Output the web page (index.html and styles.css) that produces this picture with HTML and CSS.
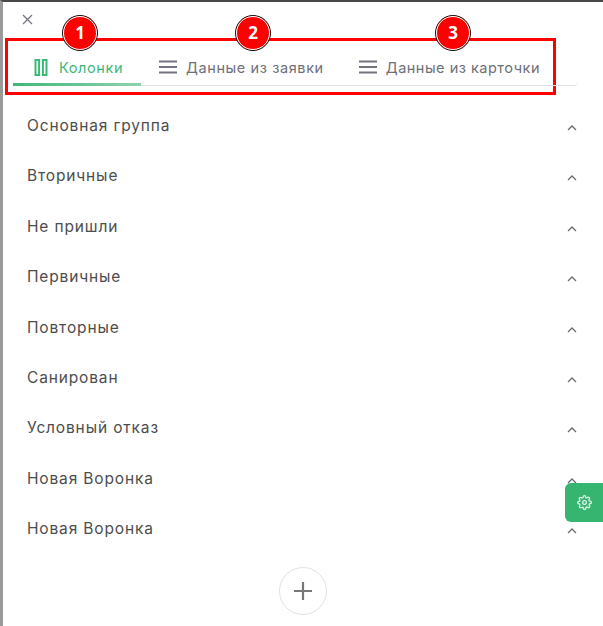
FILE: index.html
```html
<!DOCTYPE html>
<html lang="en">
<head>
  <meta charset="UTF-8" />
  <title>Настройка колонок</title>
  <link rel="stylesheet" href="styles.css">
</head>
<body>
  <div class="panel">
    <button class="close" aria-label="Закрыть">
      <svg width="11" height="11" viewBox="0 0 11 11"><path d="M1 1l9 9M10 1l-9 9" stroke="#77777f" stroke-width="1.3" fill="none"/></svg>
    </button>

    <!-- Tabs with red callout -->
    <div class="callout">
      <span class="badge badge-1">1</span>
      <span class="badge badge-2">2</span>
      <span class="badge badge-3">3</span>
      <div class="tabs">
        <div class="tab tab-active">
          <svg width="14" height="17" viewBox="0 0 14 17"><path d="M1.5 1h3.6v15H1.5zM8.9 1h3.6v15H8.9z" fill="none" stroke="#3cb878" stroke-width="2"/></svg>
          <span>Колонки</span>
        </div>
        <div class="tab tab-second">
          <svg width="18" height="14" viewBox="0 0 18 14"><path d="M0 1.5h18M0 7h18M0 12.5h18" stroke="#73737f" stroke-width="2"/></svg>
          <span>Данные из заявки</span>
        </div>
        <div class="tab tab-third">
          <svg width="18" height="14" viewBox="0 0 18 14"><path d="M0 1.5h18M0 7h18M0 12.5h18" stroke="#73737f" stroke-width="2"/></svg>
          <span>Данные из карточки</span>
        </div>
      </div>
    </div>

    <ul class="groups">
      <li class="group">Основная группа<svg class="chevron" width="10" height="6" viewBox="0 0 10 6"><path d="M1 5l4-4 4 4" fill="none" stroke="#6b6b75" stroke-width="1.3"/></svg></li>
      <li class="group">Вторичные<svg class="chevron" width="10" height="6" viewBox="0 0 10 6"><path d="M1 5l4-4 4 4" fill="none" stroke="#6b6b75" stroke-width="1.3"/></svg></li>
      <li class="group">Не пришли<svg class="chevron" width="10" height="6" viewBox="0 0 10 6"><path d="M1 5l4-4 4 4" fill="none" stroke="#6b6b75" stroke-width="1.3"/></svg></li>
      <li class="group">Первичные<svg class="chevron" width="10" height="6" viewBox="0 0 10 6"><path d="M1 5l4-4 4 4" fill="none" stroke="#6b6b75" stroke-width="1.3"/></svg></li>
      <li class="group">Повторные<svg class="chevron" width="10" height="6" viewBox="0 0 10 6"><path d="M1 5l4-4 4 4" fill="none" stroke="#6b6b75" stroke-width="1.3"/></svg></li>
      <li class="group">Санирован<svg class="chevron" width="10" height="6" viewBox="0 0 10 6"><path d="M1 5l4-4 4 4" fill="none" stroke="#6b6b75" stroke-width="1.3"/></svg></li>
      <li class="group">Условный отказ<svg class="chevron" width="10" height="6" viewBox="0 0 10 6"><path d="M1 5l4-4 4 4" fill="none" stroke="#6b6b75" stroke-width="1.3"/></svg></li>
      <li class="group">Новая Воронка<svg class="chevron" width="10" height="6" viewBox="0 0 10 6"><path d="M1 5l4-4 4 4" fill="none" stroke="#6b6b75" stroke-width="1.3"/></svg></li>
      <li class="group">Новая Воронка<svg class="chevron" width="10" height="6" viewBox="0 0 10 6"><path d="M1 5l4-4 4 4" fill="none" stroke="#6b6b75" stroke-width="1.3"/></svg></li>
    </ul>

    <div class="add-row">
      <button class="add" aria-label="Добавить">
        <svg width="20" height="20" viewBox="0 0 20 20"><path d="M10 1v18M1 10h18" stroke="#77777a" stroke-width="2.2"/></svg>
      </button>
    </div>
  </div>

  <button class="settings" aria-label="Настройки">
    <svg width="15" height="15" viewBox="0 0 24 24" fill="none" stroke="#fff" stroke-opacity=".85" stroke-width="2"><circle cx="12" cy="12" r="3"/><path d="M19.4 15a1.65 1.65 0 0 0 .33 1.82l.06.06a2 2 0 1 1-2.83 2.83l-.06-.06a1.65 1.65 0 0 0-2.82 1.17V21a2 2 0 1 1-4 0v-.09a1.65 1.65 0 0 0-2.82-1.12l-.06.06a2 2 0 1 1-2.83-2.83l.06-.06a1.65 1.65 0 0 0-1.17-2.82H3a2 2 0 1 1 0-4h.09a1.65 1.65 0 0 0 1.12-2.82l-.06-.06a2 2 0 1 1 2.83-2.83l.06.06a1.65 1.65 0 0 0 2.82-1.17V3a2 2 0 1 1 4 0v.09a1.65 1.65 0 0 0 2.82 1.12l.06-.06a2 2 0 1 1 2.83 2.83l-.06.06a1.65 1.65 0 0 0 1.17 2.82H21a2 2 0 1 1 0 4h-.09a1.65 1.65 0 0 0-1.51 1z"/></svg>
  </button>
</body>
</html>
```

FILE: styles.css
```css
* {
  box-sizing: border-box;
}

html, body {
  height: 100%;
}

body {
  margin: 0;
  overflow: hidden;
  font-family: 'Inter', sans-serif;
  background-color: #fff;
  color: #4a4a4a;
  border-top: 2px solid #484848;
  border-left: 3px solid #9a9a9a;
}

button {
  padding: 0;
  border: none;
  background: none;
  cursor: pointer;
}

.panel {
  padding: 0 11px 0 2px;
}

.close {
  display: block;
  width: 11px;
  height: 11px;
  margin: 12px 0 0 17px;
}

.close svg {
  display: block;
}

/* Tabs */
.callout {
  position: relative;
  height: 57px;
  margin-top: 13px;
  margin-right: 36px;
  border: 3px solid #f00;
  padding-top: 12px;
}

.tabs {
  display: flex;
  height: 33px;
  margin-left: 5px;
  margin-right: -25px;
  border-bottom: 1px solid #dfe1e8;
  border-bottom-right-radius: 4px;
}

.tab {
  display: flex;
  align-items: center;
  height: 33px;
  padding-bottom: 5px;
  font-size: 14.5px;
  letter-spacing: 0.6px;
  color: #6f6f78;
  white-space: nowrap;
}

.tab-active {
  width: 128px;
  padding-bottom: 2px;
  padding-left: 21px;
  gap: 11px;
  color: #3cb878;
  border-bottom: 3px solid;
  border-image: linear-gradient(90deg, #3cb878, #8fd3ae) 1;
}

.tab-second {
  margin-left: 18px;
  gap: 9px;
}

.tab-third {
  margin-left: 35px;
  gap: 9px;
  letter-spacing: 0.5px;
}

.badge {
  position: absolute;
  top: -26px;
  width: 36px;
  height: 36px;
  border: 1px solid #111;
  outline: 1px solid #fff;
  outline-offset: -2px;
  border-radius: 50%;
  background-color: #f00;
  color: #fff;
  font-family: 'Noto Sans', sans-serif;
  font-size: 17px;
  font-weight: 700;
  line-height: 33px;
  text-align: center;
}

.badge-1 { left: 54px; }
.badge-2 { left: 227px; }
.badge-3 { left: 427px; }

/* Group list */
.groups {
  margin: 5.4px 0 0;
  padding: 0;
  list-style: none;
}

.group {
  display: flex;
  align-items: center;
  justify-content: space-between;
  height: 50.4px;
  padding: 0 15px 0 22px;
  font-size: 15.5px;
  letter-spacing: 0.85px;
  color: #4d4d4d;
}

.chevron {
  margin-top: 5px;
}

.add-row {
  display: flex;
  justify-content: center;
  margin-top: 13px;
  padding-left: 8px;
}

.add {
  display: flex;
  align-items: center;
  justify-content: center;
  width: 48px;
  height: 48px;
  border: 1px solid #e2e2e2;
  border-radius: 50%;
  background-color: #fff;
}

.settings {
  position: fixed;
  top: 483px;
  right: 0;
  display: flex;
  align-items: center;
  justify-content: center;
  width: 38px;
  height: 39px;
  border-radius: 6px 0 0 6px;
  background-color: #35b56f;
}
```
